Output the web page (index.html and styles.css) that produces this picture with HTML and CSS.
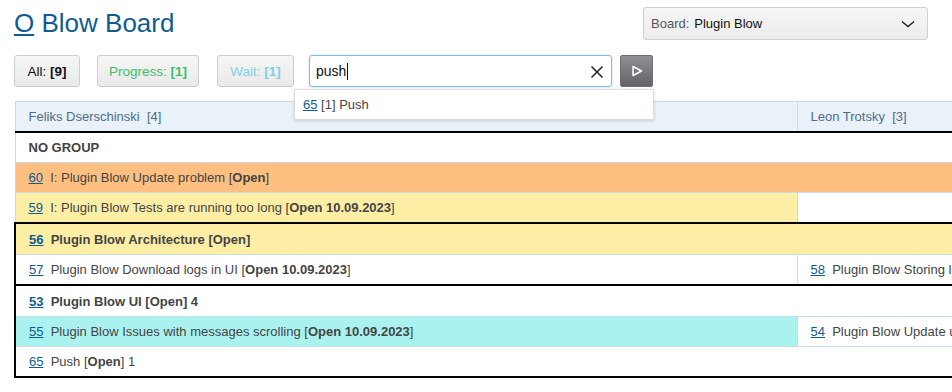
FILE: index.html
```html
<!DOCTYPE html>
<html lang="en">
<head>
    <meta charset="UTF-8">
    <title>O Blow Board</title>
    <link rel="stylesheet" href="styles.css">
</head>
<body>
    <div class="page">
        <div class="top">
            <h1><a href="#">O</a> Blow Board</h1>
            <div class="board-select">
                <span class="label">Board:</span>
                <span class="value">Plugin Blow</span>
                <svg class="chev" width="14" height="8" viewBox="0 0 14 8"><path d="M1 1.5 L7 6.5 L13 1.5" fill="none" stroke="#222" stroke-width="1.4"/></svg>
            </div>
        </div>

        <div class="toolbar">
            <button class="btn btn-all">All: <b>[9]</b></button>
            <button class="btn btn-progress">Progress: <b>[1]</b></button>
            <button class="btn btn-wait">Wait: <b>[1]</b></button>
            <div class="search">
                <span class="search-text">push</span><span class="caret"></span>
                <svg class="clear" width="14" height="14" viewBox="0 0 14 14"><path d="M1.5 1.5 L12.5 12.5 M12.5 1.5 L1.5 12.5" stroke="#222" stroke-width="1.5"/></svg>
                <div class="suggest"><a href="#">65</a> [1] Push</div>
            </div>
            <button class="btn-send"><svg width="12" height="12" viewBox="0 0 12 12"><path d="M2 1.5 L10.5 6 L2 10.5 Z" fill="none" stroke="#fff" stroke-width="1.5" stroke-linejoin="round"/></svg></button>
        </div>

        <div class="board">
            <table>
                <thead>
                    <tr>
                        <th class="col1">Feliks Dserschinski&nbsp;&nbsp;[4]</th>
                        <th>Leon Trotsky&nbsp;&nbsp;[3]</th>
                    </tr>
                </thead>
                <tbody>
                    <tr><td colspan="2" class="group-title">NO GROUP</td></tr>
                    <tr class="orange"><td colspan="2"><a href="#">60</a>&nbsp; I: Plugin Blow Update problem [<b>Open</b>]</td></tr>
                    <tr><td class="yellow"><a href="#">59</a>&nbsp; I: Plugin Blow Tests are running too long [<b>Open 10.09.2023</b>]</td><td></td></tr>
                </tbody>
                <tbody class="group">
                    <tr class="yellow"><td colspan="2" class="group-title"><a href="#">56</a>&nbsp; Plugin Blow Architecture [<b>Open</b>]</td></tr>
                    <tr><td><a href="#">57</a>&nbsp; Plugin Blow Download logs in UI [<b>Open 10.09.2023</b>]</td><td><a href="#">58</a>&nbsp; Plugin Blow Storing logs in DB [<b>Open</b>]</td></tr>
                </tbody>
                <tbody class="group">
                    <tr><td colspan="2" class="group-title"><a href="#">53</a>&nbsp; Plugin Blow UI [<b>Open</b>] 4</td></tr>
                    <tr><td class="cyan"><a href="#">55</a>&nbsp; Plugin Blow Issues with messages scrolling [<b>Open 10.09.2023</b>]</td><td><a href="#">54</a>&nbsp; Plugin Blow Update user list [<b>Open</b>]</td></tr>
                    <tr><td colspan="2"><a href="#">65</a>&nbsp; Push [<b>Open</b>] 1</td></tr>
                </tbody>
            </table>
        </div>
    </div>
</body>
</html>
```

FILE: styles.css
```css
html, body { overflow: hidden; }
body { font-family: "Liberation Sans", Arial, sans-serif; background: #fff; color: #444; margin: 0; padding: 0; }
a { color: #0f5c95; }
.page { padding-left: 14px; }

.top { display: flex; justify-content: space-between; align-items: flex-start; padding: 7px 24px 0 0; height: 48px; }
.top h1 { margin: 0; font-size: 26px; font-weight: normal; line-height: 32px; color: #0f5c8f; }
.top h1 a { color: #0f5c8f; }
.board-select { display: flex; align-items: center; width: 269px; height: 31px; padding: 0 7px; border: 1px solid #cfcfcf; border-radius: 3px; background: linear-gradient(#f6f6f6, #ececec); font-size: 13px; }
.board-select .label { color: #555; margin-right: 5px; }
.board-select .value { color: #111; flex: 1; }
.board-select .chev { margin-right: 5px; }

.toolbar { display: flex; align-items: center; height: 32px; }
.btn { height: 32px; padding: 0; border: 1px solid #cdcdcd; border-radius: 3px; background: linear-gradient(#f6f6f6, #e9e9e9); font-family: inherit; font-size: 13.5px; color: #111; margin-right: 17px; text-align: center; }
.btn b { font-weight: bold; }
.btn-all { width: 66px; }
.btn-progress { width: 102px; color: #3cc06a; margin-right: 18px; }
.btn-wait { width: 77px; color: #80cfe8; margin-right: 15px; }
.search { position: relative; display: flex; align-items: center; width: 289px; height: 30px; padding: 0 6px; border: 1px solid #7cc0ec; border-radius: 3px; box-shadow: 0 0 2px rgba(102, 175, 233, 0.5); font-size: 14px; color: #111; }
.search .caret { display: inline-block; width: 1px; height: 17px; background: #111; margin-left: 1px; }
.search .clear { position: absolute; right: 7px; top: 9px; }
.suggest { position: absolute; left: -16px; top: 33px; width: 350px; height: 29px; padding-left: 8px; line-height: 29px; background: #fff; border: 1px solid #ddd; box-shadow: 0 1px 3px rgba(0, 0, 0, 0.15); color: #444; font-size: 13px; z-index: 5; }
.btn-send { display: flex; align-items: center; justify-content: center; width: 33px; height: 32px; margin-left: 8px; padding: 0; border: 1px solid #6e6f72; border-radius: 2px; background: linear-gradient(#8e9095, #626366); }

.board { margin-top: 14px; overflow: hidden; }
table { border-collapse: collapse; width: 1250px; font-size: 13px; table-layout: fixed; }
th { text-align: left; font-weight: normal; color: #4f6c8a; background: #e9f1f9; border: 1px solid #c9dcea; border-bottom: 2px solid #000; height: 29px; padding: 0 13px; }
th.col1 { width: 755px; }
td { height: 29px; padding: 0 13px; border: 1px solid #c9dcea; border-right: none; white-space: nowrap; overflow: hidden; color: #444; }
tbody { border-top: 2px solid #000; border-bottom: 2px solid #000; }
tbody.group { border-left: 2px solid #000; }
.group-title { font-weight: bold; }
.group .group-title { height: 30px; }
.orange td, td.orange { background: #ffbf80; }
.yellow td, td.yellow { background: #fdeea6; }
td.cyan { background: #aaf2ef; }
td a { color: #0f5c95; }
```
